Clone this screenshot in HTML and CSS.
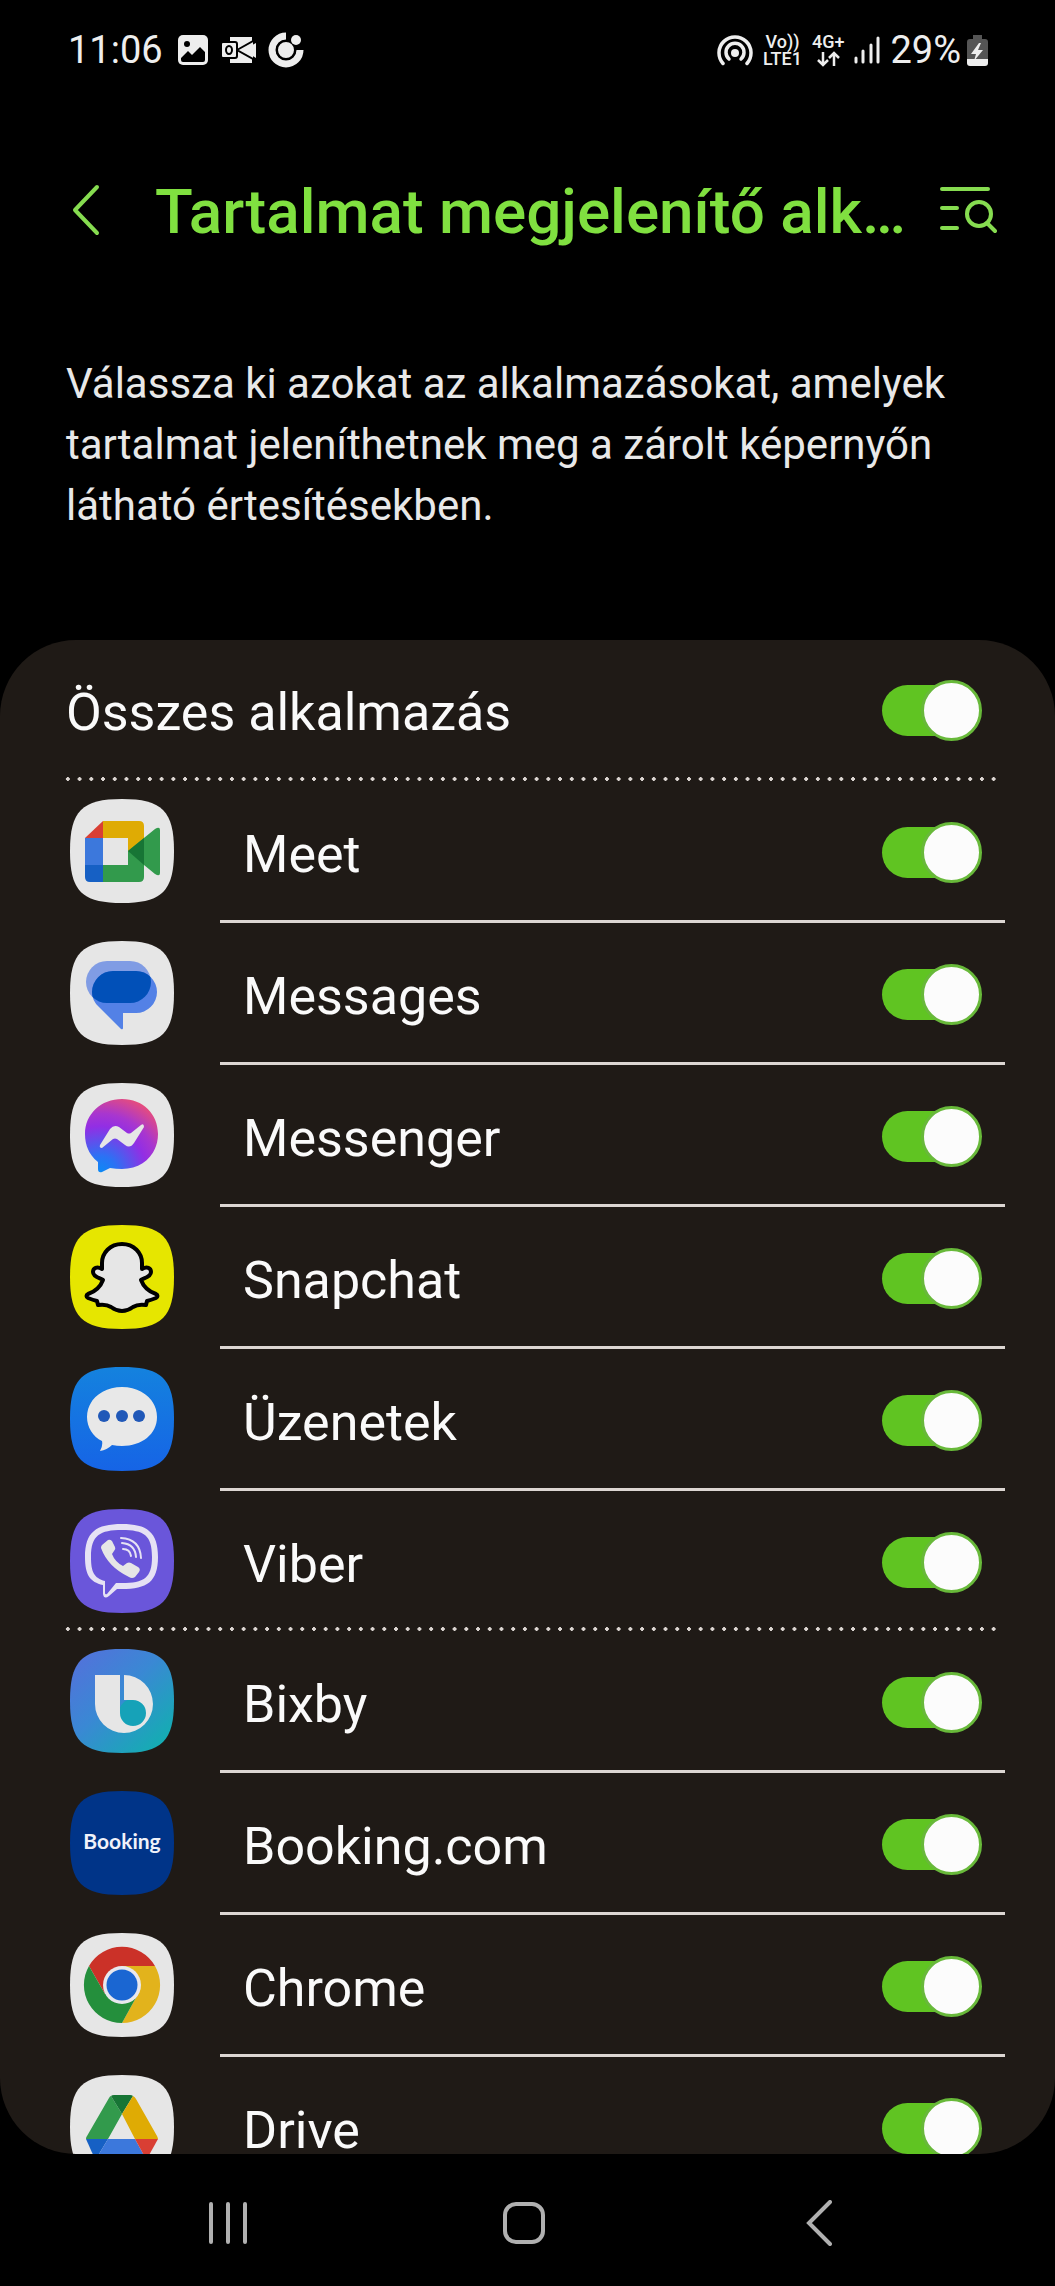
FILE: index.html
```
<!DOCTYPE html>
<html lang="hu">
<head>
  <meta charset="UTF-8">
  <meta name="viewport" content="width=device-width, initial-scale=1">
  <title>Tartalmat megjelenítő alkalmazások</title>
  <link rel="stylesheet" href="styles.css">
</head>
<body>
  <div class="status-bar">
    <span class="clock">11:06</span>
    <div class="notifications">
      <svg width="30" height="30" viewBox="0 0 30 30">
        <rect width="30" height="30" rx="5" fill="#eee"/>
        <circle cx="9" cy="9" r="3" fill="#000"/>
        <path d="M3 23l7-7 4 4 8-8 5 5v8a2 2 0 0 1-2 2H5a2 2 0 0 1-2-2z" fill="#000"/>
      </svg>
      <svg width="36" height="28" viewBox="0 0 36 28">
        <path d="M10 1h22v26H10z" fill="#eee"/>
        <path d="M17 14L35 4v20z" fill="#eee" stroke="#000" stroke-width="2"/>
        <path d="M33 3h3v22h-3z" fill="#000"/>
        <path d="M23 14l13-7v15z" fill="#eee"/>
        <rect x="1" y="6" width="16" height="16" rx="2" fill="#eee" stroke="#000" stroke-width="2"/>
        <ellipse cx="9" cy="14" rx="3" ry="4" fill="none" stroke="#000" stroke-width="2"/>
      </svg>
      <svg width="36" height="36" viewBox="0 0 36 36">
        <path d="M18 4a14 14 0 1 0 14 14" fill="none" stroke="#eee" stroke-width="7"/>
        <circle cx="18" cy="18" r="9" fill="#eee" stroke="#000" stroke-width="2"/>
        <circle cx="28" cy="8" r="5" fill="#eee"/>
      </svg>
    </div>
    <div class="system-icons">
      <svg width="36" height="32" viewBox="0 0 36 32">
        <g fill="none" stroke="#eee" stroke-width="3.500" stroke-linecap="round">
          <path d="M6 29.500a16 16 0 1 1 24 0"/>
          <path d="M12 25a9 9 0 1 1 12 0"/>
        </g>
        <circle cx="18" cy="19" r="4" fill="#eee"/>
      </svg>
      <div class="net"><span>Vo))</span><span>LTE1</span></div>
      <div class="net">
        <span>4G+</span>
        <svg width="24" height="17" viewBox="0 0 24 17" fill="none" stroke="#eee" stroke-width="2.500">
          <path d="M7 2v13M2 10l5 5 5-5M18 16V3M13 8l5-5 5 5"/>
        </svg>
      </div>
      <svg class="signal" width="26" height="28" viewBox="0 0 26 28" stroke="#eee" stroke-width="3" stroke-linecap="round">
        <path d="M2 22v4M9 15v11M17 9v17M24 2v24"/>
      </svg>
      <span class="battery-level">29%</span>
      <svg width="21" height="31" viewBox="0 0 21 31">
        <path d="M6 0h9v4h3a3 3 0 0 1 3 3v17H0V7a3 3 0 0 1 3-3h3z" fill="#555"/>
        <path d="M0 24h21v4a3 3 0 0 1-3 3H3a3 3 0 0 1-3-3z" fill="#eee"/>
        <path d="M12 8L4 19h5l-2 7 9-11h-5l3-7z" fill="#eee"/>
      </svg>
    </div>
  </div>

  <header class="app-bar">
    <button class="icon-btn back" aria-label="Vissza">
      <svg width="28" height="52" viewBox="0 0 28 52" fill="none" stroke="#86dc50" stroke-width="4" stroke-linecap="round" stroke-linejoin="round">
        <path d="M25 3L3 26l22 23"/>
      </svg>
    </button>
    <h1>Tartalmat megjelenítő alk…</h1>
    <button class="icon-btn" aria-label="Keresés">
      <svg width="57" height="48" viewBox="0 0 57 48" fill="none" stroke="#86dc50" stroke-width="4" stroke-linecap="round">
        <path d="M2 3h46M2 22h15M2 42h15M47 37l8 8"/>
        <circle cx="39" cy="28" r="12"/>
      </svg>
    </button>
  </header>

  <p class="description">Válassza ki azokat az alkalmazásokat, amelyek tartalmat jeleníthetnek meg a zárolt képernyőn látható értesítésekben.</p>

  <main class="card">
    <label class="all-apps">
      <span class="name">Összes alkalmazás</span>
      <input type="checkbox" class="switch" checked>
    </label>
    <div class="dots"></div>

    <ul class="app-list">
      <li class="app">
        <svg class="app-icon" viewBox="0 0 104 104">
          <path d="M0 52C0 12 12 0 52 0s52 12 52 52-12 52-52 52S0 92 0 52z" fill="#e6e6e6"/>
          <path d="M33 22v17H15z" fill="#d93f34"/>
          <path d="M33 22h36q5 0 5 5v16L58 53V39H33z" fill="#dfab04"/>
          <path d="M15 39h18v27H15z" fill="#3c78dc"/>
          <path d="M15 66h18v17H20q-5 0-5-5z" fill="#1660c4"/>
          <path d="M33 66h25V52l27-22q5-3 5 1v43q0 4-5 1l-11-9v12q0 5-5 5H33z" fill="#329a4c"/>
          <path d="M58 52l16-13v27z" fill="#177535"/>
        </svg>
        <label class="app-body">
          <span class="name">Meet</span>
          <input type="checkbox" class="switch" checked>
        </label>
      </li>
      <li class="app">
        <svg class="app-icon" viewBox="0 0 104 104">
          <clipPath id="msg-back"><rect x="16" y="20" width="65" height="42" rx="21"/></clipPath>
          <path d="M0 52C0 12 12 0 52 0s52 12 52 52-12 52-52 52S0 92 0 52z" fill="#e6e6e6"/>
          <rect x="16" y="20" width="65" height="42" rx="21" fill="#809ce4"/>
          <path d="M43 30h23a21 21 0 0 1 0 42H53v15q0 2-2 1L29 66Q22 60 22 51A21 21 0 0 1 43 30z" fill="#5381e6"/>
          <path d="M43 30h23a21 21 0 0 1 0 42H53v15q0 2-2 1L29 66Q22 60 22 51A21 21 0 0 1 43 30z" fill="#0150b8" clip-path="url(#msg-back)"/>
        </svg>
        <label class="app-body">
          <span class="name">Messages</span>
          <input type="checkbox" class="switch" checked>
        </label>
      </li>
      <li class="app">
        <svg class="app-icon" viewBox="0 0 104 104">
          <radialGradient id="messenger" gradientUnits="userSpaceOnUse" cx="30" cy="90" r="85">
            <stop offset="0" stop-color="#0a8bf5"/>
            <stop offset=".2" stop-color="#2b72f4"/>
            <stop offset=".55" stop-color="#922ee4"/>
            <stop offset=".7" stop-color="#a836cf"/>
            <stop offset="1" stop-color="#f4526a"/>
          </radialGradient>
          <path d="M0 52C0 12 12 0 52 0s52 12 52 52-12 52-52 52S0 92 0 52z" fill="#e6e6e6"/>
          <path d="M52 16c21 0 36 15 36 35S73 86 52 86q-6 0-12-1l-8 4q-4 1-4-3v-7C19 72 15 62 15 51c0-20 16-35 37-35z" fill="url(#messenger)"/>
          <path d="M30 62l10-16q4-5 9-2l8 6q2 1 4 0l10-8q3-2 3 2L64 60q-4 6-9 2l-8-6q-2-1-4 0l-11 9q-3 0-2-3z" fill="#e6e6e6"/>
        </svg>
        <label class="app-body">
          <span class="name">Messenger</span>
          <input type="checkbox" class="switch" checked>
        </label>
      </li>
      <li class="app">
        <svg class="app-icon" viewBox="0 0 104 104">
          <path d="M0 52C0 12 12 0 52 0s52 12 52 52-12 52-52 52S0 92 0 52z" fill="#e6e600"/>
          <path d="M52 19c12 0 20 9 20 19v6c5-3 9-1 9 3 0 5-7 6-10 8 3 8 9 12 15 14 2 1 2 3 0 4q-5 2-9 3l-1 4c-7-1-10 0-13 2-4 3-7 4-11 4s-7-1-11-4c-3-2-6-3-13-2l-1-4q-4-1-9-3c-2-1-2-3 0-4 6-2 12-6 15-14-3-2-10-3-10-8 0-4 4-6 9-3v-6c0-10 8-19 20-19z" fill="#e6e6e6" stroke="#000" stroke-width="4" stroke-linejoin="round"/>
        </svg>
        <label class="app-body">
          <span class="name">Snapchat</span>
          <input type="checkbox" class="switch" checked>
        </label>
      </li>
      <li class="app">
        <svg class="app-icon" viewBox="0 0 104 104">
          <linearGradient id="sms" x2="0" y2="1">
            <stop offset="0" stop-color="#1482de"/>
            <stop offset="1" stop-color="#1664e6"/>
          </linearGradient>
          <path d="M0 52C0 12 12 0 52 0s52 12 52 52-12 52-52 52S0 92 0 52z" fill="url(#sms)"/>
          <path d="M52 20c20 0 35 13 35 30S72 79 52 79q-5 0-10-1-5 5-12 6 3-5 2-10C23 70 17 60 17 50c0-17 15-30 35-30z" fill="#e8e8e8"/>
          <g fill="#2058b8">
            <circle cx="34" cy="49" r="6"/>
            <circle cx="52" cy="49" r="6"/>
            <circle cx="69" cy="49" r="6"/>
          </g>
        </svg>
        <label class="app-body">
          <span class="name">Üzenetek</span>
          <input type="checkbox" class="switch" checked>
        </label>
      </li>
      <li class="app">
        <svg class="app-icon" viewBox="0 0 104 104">
          <path d="M0 52C0 12 12 0 52 0s52 12 52 52-12 52-52 52S0 92 0 52z" fill="#6a56da"/>
          <path fill-rule="evenodd" d="M52 15c25 0 36 8 36 33S77 80 52 80h-5l-8 7q-5 4-6-2v-9C20 73 15 66 15 48c0-25 11-33 37-33zM52 21c-22 0-31 5-31 27 0 15 3 21 14 24v12q0 2 2 1l9-11h6c22 0 30-5 30-26 0-22-8-27-30-27z" fill="#e6e2f4"/>
          <path d="M32 36l6-5q2-1 4 1l3 6q1 2-1 4l-2 3q3 8 11 12l4-3q2-1 4 0l7 4q3 2 1 5l-4 5q-3 2-6 0-21-10-28-29 0-2 1-3z" fill="#e6e6e6"/>
          <path d="M51 29q19 1 20 20M52 34q13 1 14 14M53 40q7 0 8 7" fill="none" stroke="#e6e2f4" stroke-width="2" stroke-linecap="round"/>
        </svg>
        <label class="app-body">
          <span class="name">Viber</span>
          <input type="checkbox" class="switch" checked>
        </label>
      </li>
    </ul>
    <div class="dots"></div>

    <ul class="app-list">
      <li class="app">
        <svg class="app-icon" viewBox="0 0 104 104">
          <linearGradient id="bixby" x1=".1" y1=".1" x2=".85" y2=".9">
            <stop offset="0" stop-color="#5074da"/>
            <stop offset=".45" stop-color="#3a88d4"/>
            <stop offset="1" stop-color="#16abb4"/>
          </linearGradient>
          <path d="M0 52C0 12 12 0 52 0s52 12 52 52-12 52-52 52S0 92 0 52z" fill="url(#bixby)"/>
          <circle cx="63" cy="64" r="14" fill="#16a2b8"/>
          <path d="M25 26h25v38a13 13 0 1 0 13-13h-9V26A29 29 0 0 1 54 84 29 29 0 0 1 25 55z" fill="#e6e6e6"/>
        </svg>
        <label class="app-body">
          <span class="name">Bixby</span>
          <input type="checkbox" class="switch" checked>
        </label>
      </li>
      <li class="app">
        <svg class="app-icon" viewBox="0 0 104 104">
          <path d="M0 52C0 12 12 0 52 0s52 12 52 52-12 52-52 52S0 92 0 52z" fill="#003488"/>
          <text class="booking-text" x="52" y="58" text-anchor="middle">Booking</text>
        </svg>
        <label class="app-body">
          <span class="name">Booking.com</span>
          <input type="checkbox" class="switch" checked>
        </label>
      </li>
      <li class="app">
        <svg class="app-icon" viewBox="0 0 104 104">
          <path d="M0 52C0 12 12 0 52 0s52 12 52 52-12 52-52 52S0 92 0 52z" fill="#e6e6e6"/>
          <path d="M19 33a38 38 0 0 1 66 0H52L35 61z" fill="#cb3128"/>
          <path d="M85 33a38 38 0 0 1-33 57l16-29-16-28z" fill="#e2b31c"/>
          <path d="M52 90a38 38 0 0 1-33-57l16 28h33z" fill="#248f3c"/>
          <circle cx="52" cy="52" r="19" fill="#e8e8ee"/>
          <circle cx="52" cy="52" r="15.500" fill="#1a66d2"/>
        </svg>
        <label class="app-body">
          <span class="name">Chrome</span>
          <input type="checkbox" class="switch" checked>
        </label>
      </li>
      <li class="app">
        <svg class="app-icon" viewBox="0 0 104 104">
          <path d="M0 52C0 12 12 0 52 0s52 12 52 52-12 52-52 52S0 92 0 52z" fill="#e6e6e6"/>
          <path d="M41 21l11 18-14 25H16q0-2 1-3l22-38q1-2 2-2z" fill="#329a4c"/>
          <path d="M41 21q1-1 3-1h16q2 0 3 1L52 39z" fill="#177535"/>
          <path d="M63 21q2 1 3 3l21 37q1 2 1 3H65L52 39z" fill="#dfab04"/>
          <path d="M16 64h22L26 84q-1 0-2-2z" fill="#1660c4"/>
          <path d="M38 64h27l11 20-3 1H30l-4-1z" fill="#3c78dc"/>
          <path d="M65 64h23L78 82l-2 2z" fill="#d93f34"/>
        </svg>
        <label class="app-body">
          <span class="name">Drive</span>
          <input type="checkbox" class="switch" checked>
        </label>
      </li>
    </ul>
  </main>

  <nav class="nav-bar">
    <button class="icon-btn" aria-label="Legutóbbiak">
      <svg width="40" height="42" viewBox="0 0 40 42" stroke="#b0b0b0" stroke-width="4" stroke-linecap="round">
        <path d="M3 2v38M20 2v38M37 2v38"/>
      </svg>
    </button>
    <button class="icon-btn" aria-label="Kezdőképernyő">
      <svg width="44" height="44" viewBox="0 0 44 44">
        <rect x="3" y="3" width="38" height="38" rx="11" fill="none" stroke="#b0b0b0" stroke-width="4"/>
      </svg>
    </button>
    <button class="icon-btn" aria-label="Vissza">
      <svg width="26" height="46" viewBox="0 0 26 46" fill="none" stroke="#b0b0b0" stroke-width="4" stroke-linecap="round">
        <path d="M24 2L3 23l21 21"/>
      </svg>
    </button>
  </nav>
</body>
</html>
```

FILE: styles.css
```
* {
  box-sizing: border-box;
}

body {
  margin: 0;
  height: 100vh;
  display: flex;
  flex-direction: column;
  background-color: #000;
  color: #fafafa;
  font-family: Roboto, "Noto Sans", sans-serif;
}

svg {
  display: block;
  flex-shrink: 0;
}

.icon-btn {
  display: flex;
  align-items: center;
  justify-content: center;
  padding: 0;
  border: none;
  background: none;
  cursor: pointer;
}

/* status bar */
.status-bar {
  display: flex;
  align-items: center;
  height: 100px;
  padding: 0 67px 0 68px;
  color: #eee;
  font-size: 38px;
  line-height: 44px;
}

.notifications {
  display: flex;
  align-items: center;
  gap: 12px;
  margin-left: 15px;
}

.system-icons {
  display: flex;
  align-items: center;
  gap: 10px;
  margin-left: auto;
}

.net {
  display: flex;
  flex-direction: column;
  align-items: center;
  font-size: 18px;
  font-weight: 500;
  line-height: 17px;
}

.battery-level {
  margin-right: -4px;
}

/* title */
.app-bar {
  display: flex;
  align-items: center;
  height: 220px;
  padding: 0 58px 0 72px;
}

.app-bar h1 {
  flex: 1;
  margin: 0 0 0 55px;
  padding-top: 4px;
  color: #80e040;
  font-size: 62px;
  font-weight: 500;
  line-height: 76px;
  white-space: nowrap;
}

.description {
  margin: 0;
  padding: 33px 66px 104px;
  color: #e8e8e8;
  font-size: 42px;
  line-height: 61px;
}

/* list card */
.card {
  flex: 1;
  min-height: 0;
  overflow-y: auto;
  scrollbar-width: none;
  border-radius: 76px;
  background-color: #1f1a16;
}

.all-apps {
  display: flex;
  align-items: center;
  justify-content: space-between;
  height: 137px;
  padding: 3px 74px 0 66px;
}

.name {
  padding-top: 5px;
  font-size: 52px;
  line-height: 60px;
}

.dots {
  height: 4px;
  margin: 0 55px 0 62px;
  background-image: radial-gradient(circle, #dcd6d2 2px, transparent 2px);
  background-size: calc(100% / 80) 4px;
}

.app-list {
  margin: 0;
  padding: 0;
  list-style: none;
}

.app {
  display: flex;
  height: 142px;
  padding: 0 50px 0 70px;
}

.app-icon {
  width: 104px;
  height: 104px;
  margin: 18px 46px 0 0;
}

.app-body {
  flex: 1;
  display: flex;
  align-items: center;
  justify-content: space-between;
  padding: 3px 24px 0 23px;
  border-bottom: 3px solid #dcd6d2;
}

.app:last-child {
  height: 136px;
}

.app:last-child .app-body {
  padding-top: 6px;
  border-bottom: none;
}

.booking-text {
  fill: #f0f2fa;
  font-family: Lato, sans-serif;
  font-size: 21px;
  font-weight: bold;
}

/* toggle */
.switch {
  appearance: none;
  position: relative;
  width: 99px;
  height: 51px;
  margin: 0;
  border-radius: 26px;
  background-color: #60c422;
  cursor: pointer;
}

.switch::before {
  content: "";
  box-sizing: border-box;
  position: absolute;
  top: -5px;
  right: -1px;
  width: 61px;
  height: 61px;
  border: 3px solid #68b93a;
  border-radius: 50%;
  background-color: #fcfcfc;
}

.switch:not(:checked) {
  background-color: #6b6662;
}

.switch:not(:checked)::before {
  right: auto;
  left: -1px;
  border-color: #8a8581;
}

/* bottom navigation */
.nav-bar {
  display: flex;
  height: 132px;
  padding: 6px 88px 0 80px;
}

.nav-bar .icon-btn {
  flex: 1;
}
```
